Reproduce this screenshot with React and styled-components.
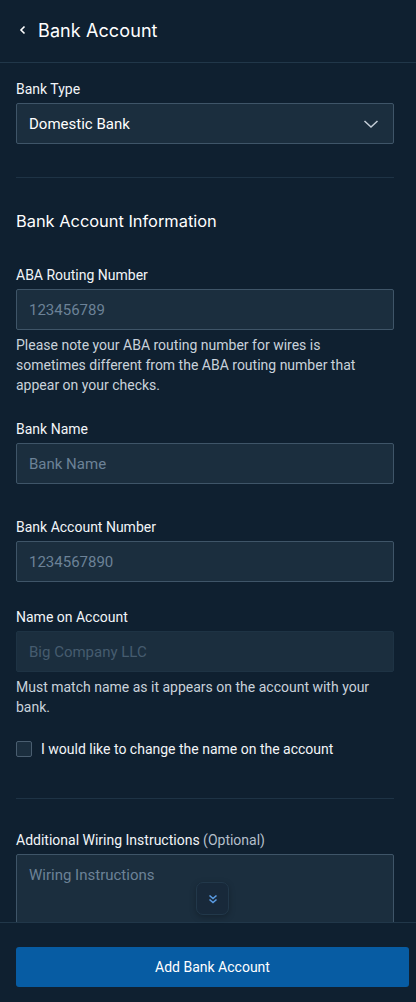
import React, { useState } from "react";
import styled, { createGlobalStyle } from "styled-components";

const GlobalStyle = createGlobalStyle`
  * { box-sizing: border-box; }
  html, body { margin: 0; padding: 0; background: #0f2030; }
  body { font-family: Roboto, "Liberation Sans", Arial, sans-serif; color: #ffffff; }
`;

const Page = styled.div`
  height: 100vh;
  display: flex;
  flex-direction: column;
  background: #0f2030;
  overflow: hidden;
`;

const Header = styled.header`
  flex: none;
  height: 63px;
  display: flex;
  align-items: center;
  gap: 11px;
  padding: 0 16px 2px 19px;
  border-bottom: 1px solid #213749;
`;

const BackButton = styled.button`
  border: none;
  background: transparent;
  padding: 0;
  display: flex;
  align-items: center;
  cursor: pointer;
`;

const Title = styled.h1`
  margin: 0;
  font-family: Inter, "Noto Sans", sans-serif;
  font-size: 18px;
  font-weight: 400;
  letter-spacing: 0.1px;
  color: #ffffff;
`;

const BodyWrap = styled.div`
  flex: 1;
  position: relative;
  min-height: 0;
`;

const Scroll = styled.main`
  height: 100%;
  overflow: hidden;
  padding: 16px 22px 0 16px;
`;

const Field = styled.div`
  margin-bottom: ${(p) => p.$after || 0}px;
`;

const Label = styled.label`
  display: block;
  font-size: 14px;
  line-height: 20px;
  margin-bottom: 4px;
  color: #f2f5f8;
`;

const Optional = styled.span`
  color: #b4bfca;
`;

const Input = styled.input`
  display: block;
  width: 100%;
  height: 41px;
  padding: 0 12px;
  border-radius: 2px;
  border: 1px solid ${(p) => (p.disabled ? "#1e3344" : "#3f5568")};
  background: #1b2e3e;
  color: #ffffff;
  font-family: inherit;
  font-size: 15px;
  outline: none;

  &::placeholder {
    color: ${(p) => (p.disabled ? "#465c6f" : "#6c8297")};
  }
`;

const TextArea = styled.textarea`
  display: block;
  width: 100%;
  height: 110px;
  padding: 9px 12px;
  border-radius: 2px;
  border: 1px solid #3f5568;
  background: #1b2e3e;
  color: #ffffff;
  font-family: inherit;
  font-size: 15px;
  line-height: 22px;
  resize: none;
  outline: none;

  &::placeholder {
    color: #6c8297;
  }
`;

const SelectBox = styled.div`
  height: 41px;
  display: flex;
  align-items: center;
  justify-content: space-between;
  padding: 0 14px 0 12px;
  border-radius: 2px;
  border: 1px solid #3f5568;
  background: #1b2e3e;
  font-size: 15px;
  font-weight: 400;
  color: #ffffff;
`;

const Help = styled.p`
  margin: 5px 0 0;
  padding-right: 12px;
  font-size: 14px;
  line-height: 20px;
  color: #c9d2db;
`;

const Divider = styled.hr`
  margin: 0;
  border: none;
  border-top: 1px solid #1e3345;
  margin-bottom: ${(p) => p.$after || 0}px;
`;

const SectionTitle = styled.h2`
  margin: 0 0 32px;
  font-family: Inter, "Noto Sans", sans-serif;
  font-size: 16.4px;
  line-height: 24px;
  font-weight: 400;
  color: #ffffff;
`;

const CheckRow = styled.label`
  display: flex;
  align-items: center;
  gap: 9px;
  height: 20px;
  font-size: 14px;
  color: #f2f5f8;
  cursor: pointer;
  margin-bottom: 39px;
`;

const CheckBox = styled.span`
  width: 16px;
  height: 16px;
  flex: none;
  border: 1px solid #4a5e70;
  border-radius: 2px;
  background: ${(p) => (p.$checked ? "#0b5da5" : "#1b2e3e")};
`;

const ScrollHint = styled.button`
  position: absolute;
  left: 196px;
  bottom: 7px;
  width: 33px;
  height: 33px;
  border-radius: 7px;
  border: 1px solid #22384a;
  background: #18293a;
  box-shadow: 0 2px 6px rgba(0, 0, 0, 0.25);
  display: flex;
  align-items: center;
  justify-content: center;
  padding: 0;
  cursor: pointer;
`;

const Footer = styled.footer`
  flex: none;
  height: 80px;
  padding: 24px 7px 0 16px;
  border-top: 1px solid #213749;
  background: #0f2030;
`;

const PrimaryButton = styled.button`
  width: 100%;
  height: 40px;
  border: none;
  border-radius: 3px;
  background: #075ca3;
  color: #ffffff;
  font-family: inherit;
  font-size: 14px;
  font-weight: 400;
  cursor: pointer;
`;

function App() {
  const [changeName, setChangeName] = useState(false);

  return (
    <>
      <GlobalStyle />
      <Page>
        <Header>
          <BackButton aria-label="Back">
            <svg width="8" height="10" viewBox="0 0 8 10">
              <polyline points="5.5,1.5 2,5 5.5,8.5" fill="none" stroke="#ffffff" strokeWidth="1.6" />
            </svg>
          </BackButton>
          <Title>Bank Account</Title>
        </Header>

        <BodyWrap>
          <Scroll>
            <Field $after={33}>
              <Label>Bank Type</Label>
              <SelectBox>
                <span>Domestic Bank</span>
                <svg width="16" height="10" viewBox="0 0 16 10">
                  <polyline points="1.5,2 8,8 14.5,2" fill="none" stroke="#c5ced7" strokeWidth="1.5" />
                </svg>
              </SelectBox>
            </Field>

            <Divider $after={31} />

            <SectionTitle>Bank Account Information</SectionTitle>

            <Field $after={24}>
              <Label>ABA Routing Number</Label>
              <Input placeholder="123456789" />
              <Help>
                Please note your ABA routing number for wires is sometimes different from the ABA
                routing number that appear on your checks.
              </Help>
            </Field>

            <Field $after={33}>
              <Label>Bank Name</Label>
              <Input placeholder="Bank Name" />
            </Field>

            <Field $after={25}>
              <Label>Bank Account Number</Label>
              <Input placeholder="1234567890" />
            </Field>

            <Field $after={22}>
              <Label>Name on Account</Label>
              <Input placeholder="Big Company LLC" disabled />
              <Help>Must match name as it appears on the account with your bank.</Help>
            </Field>

            <CheckRow onClick={() => setChangeName(!changeName)}>
              <CheckBox $checked={changeName} />
              I would like to change the name on the account
            </CheckRow>

            <Divider $after={31} />

            <Field>
              <Label>
                Additional Wiring Instructions <Optional>(Optional)</Optional>
              </Label>
              <TextArea placeholder="Wiring Instructions" />
            </Field>
          </Scroll>

          <ScrollHint aria-label="Scroll down">
            <svg width="10" height="10" viewBox="0 0 10 10">
              <polyline points="1.5,1.5 5,4.5 8.5,1.5" fill="none" stroke="#5b9ce3" strokeWidth="1.6" />
              <polyline points="1.5,5.5 5,8.5 8.5,5.5" fill="none" stroke="#5b9ce3" strokeWidth="1.6" />
            </svg>
          </ScrollHint>
        </BodyWrap>

        <Footer>
          <PrimaryButton>Add Bank Account</PrimaryButton>
        </Footer>
      </Page>
    </>
  );
}

export default App;
